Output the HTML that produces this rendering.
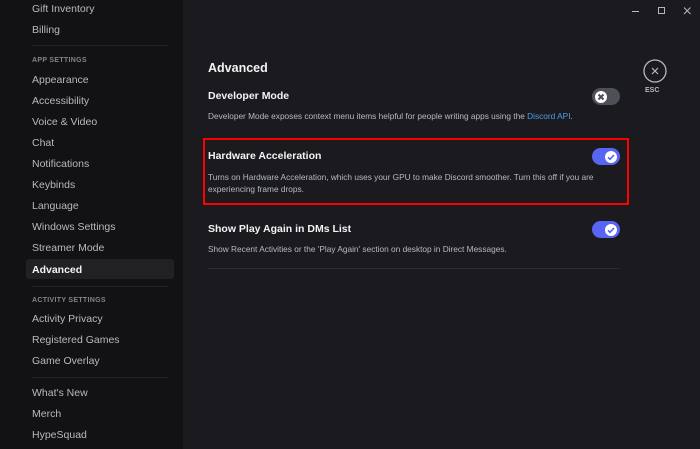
<!DOCTYPE html>
<html><head><style>
*{margin:0;padding:0;box-sizing:border-box}
body{width:700px;height:449px;overflow:hidden;background:#1b1b1f;font-family:"Liberation Sans",sans-serif;position:relative;color:#dbdee1}
#sb{position:absolute;left:0;top:0;width:183px;height:449px;background:#121214}
.it{position:absolute;left:32px;font-size:10.5px;color:#b5bac1;line-height:12px}
.hd{position:absolute;left:32px;font-size:7px;font-weight:bold;color:#80848e;letter-spacing:.3px}
.sep{position:absolute;left:32px;width:136px;height:1px;background:#222226}
.t{position:absolute;font-size:10.5px;font-weight:bold;color:#f2f3f5}
.d{position:absolute;font-size:8.3px;color:#b5bac1;line-height:12px}
.tg{position:absolute;left:592px;width:28px;height:17px;border-radius:9px;background:#5865f2}
.tg i{position:absolute;top:2.5px;width:12px;height:12px;border-radius:50%;background:#fff}
</style></head><body>
<div id="sb">
<div class="it" style="top:3px">Gift Inventory</div>
<div class="it" style="top:24px">Billing</div>
<div class="sep" style="top:45px"></div>
<div class="hd" style="top:57px">APP SETTINGS</div>
<div class="it" style="top:74px">Appearance</div>
<div class="it" style="top:95px">Accessibility</div>
<div class="it" style="top:116px">Voice &amp; Video</div>
<div class="it" style="top:137px">Chat</div>
<div class="it" style="top:158px">Notifications</div>
<div class="it" style="top:179px">Keybinds</div>
<div class="it" style="top:200px">Language</div>
<div class="it" style="top:221px">Windows Settings</div>
<div class="it" style="top:242px">Streamer Mode</div>
<div style="position:absolute;left:26px;top:259px;width:148px;height:20px;background:#212125;border-radius:3px"></div>
<div class="it" style="top:264px;color:#f2f3f5;font-weight:bold">Advanced</div>
<div class="sep" style="top:286px"></div>
<div class="hd" style="top:297px">ACTIVITY SETTINGS</div>
<div class="it" style="top:313px">Activity Privacy</div>
<div class="it" style="top:334px">Registered Games</div>
<div class="it" style="top:355px">Game Overlay</div>
<div class="sep" style="top:377px"></div>
<div class="it" style="top:387px">What's New</div>
<div class="it" style="top:408px">Merch</div>
<div class="it" style="top:429px">HypeSquad</div>
</div>
<svg style="position:absolute;left:628px;top:4px" width="70" height="14" stroke="#b5bac1" fill="none" stroke-width="1">
<path d="M4 7.5h7"/><rect x="30.5" y="3.5" width="6" height="6"/><path d="M56 3.5l6.5 6.5M62.5 3.5l-6.5 6.5"/></svg>
<div class="t" style="left:208px;top:61px;font-size:12.5px">Advanced</div>
<div class="t" style="left:208px;top:90px">Developer Mode</div>
<div class="d" style="left:208px;top:110px">Developer Mode exposes context menu items helpful for people writing apps using the <span style="color:#4a9ee8">Discord API</span>.</div>
<div class="tg" style="top:88px;background:#4e5058"><i style="left:3px"></i><svg style="position:absolute;left:3px;top:2.5px" width="12" height="12" stroke="#4e5058" stroke-width="2"><path d="M3.5 3.5l5 5M8.5 3.5l-5 5"/></svg></div>
<div style="position:absolute;left:203px;top:138px;width:426px;height:67px;border:2.5px solid #f00"></div>
<div class="t" style="left:208px;top:150px">Hardware Acceleration</div>
<div class="d" style="left:208px;top:171px">Turns on Hardware Acceleration, which uses your GPU to make Discord smoother. Turn this off if you are<br>experiencing frame drops.</div>
<div class="tg" style="top:148px"><i style="left:13px"></i><svg style="position:absolute;left:13px;top:2.5px" width="12" height="12" stroke="#5865f2" stroke-width="1.6" fill="none"><path d="M3 6.3l2 2 4-4.3"/></svg></div>
<div class="t" style="left:208px;top:223px">Show Play Again in DMs List</div>
<div class="d" style="left:208px;top:243px">Show Recent Activities or the 'Play Again' section on desktop in Direct Messages.</div>
<div class="tg" style="top:221px"><i style="left:13px"></i><svg style="position:absolute;left:13px;top:2.5px" width="12" height="12" stroke="#5865f2" stroke-width="1.6" fill="none"><path d="M3 6.3l2 2 4-4.3"/></svg></div>
<div style="position:absolute;left:208px;top:268px;width:412px;height:1px;background:#2b2b30"></div>
<svg style="position:absolute;left:643px;top:59px" width="24" height="24" stroke="#b5bac1" fill="none"><circle cx="12" cy="12" r="11" stroke-width="1.3"/><path d="M9 9l6 6M15 9l-6 6" stroke-width="1.2"/></svg>
<div style="position:absolute;left:645px;top:87px;font-size:7px;font-weight:bold;color:#b5bac1">ESC</div>
</body></html>
